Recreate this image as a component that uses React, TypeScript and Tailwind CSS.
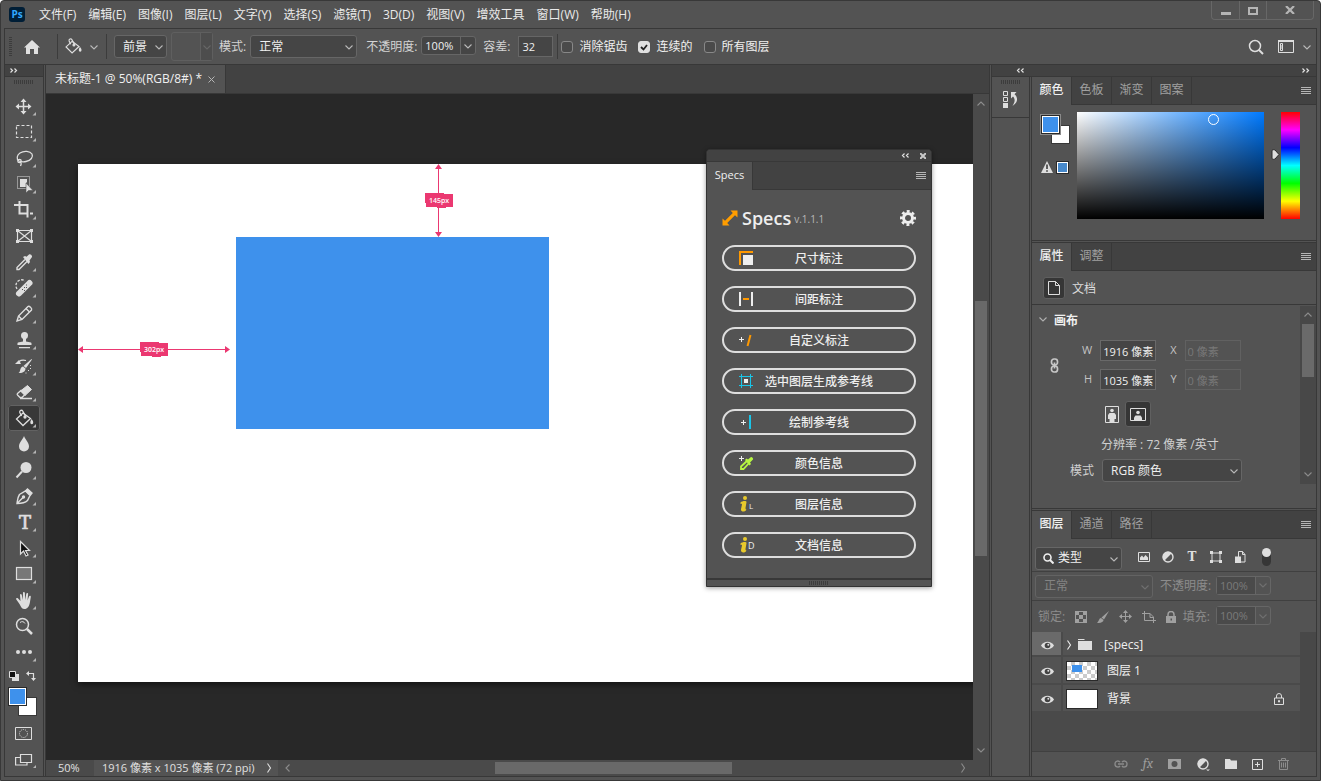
import type { ReactNode } from 'react';

const menus = [
  '文件(F)',
  '编辑(E)',
  '图像(I)',
  '图层(L)',
  '文字(Y)',
  '选择(S)',
  '滤镜(T)',
  '3D(D)',
  '视图(V)',
  '增效工具',
  '窗口(W)',
  '帮助(H)',
];

const Chevron = ({ dir = 'down', className = '' }: { dir?: 'down' | 'up' | 'left' | 'right'; className?: string }) => {
  const d = {
    down: 'M1.500 3.500L5 7l3.500-3.500',
    up: 'M1.500 6.500L5 3l3.500 3.500',
    left: 'M6.500 1.500L3 5l3.500 3.500',
    right: 'M3.500.5l3 4.500-3 4.500',
  }[dir];
  return (
    <svg width="10" height="10" viewBox="0 0 10 10" className={`shrink-0 ${className}`} fill="none" stroke="currentColor" strokeWidth="1.1">
      <path d={d} />
    </svg>
  );
};

const DoubleChevron = ({ left = false }: { left?: boolean }) => (
  <svg width="8" height="7" viewBox="0 0 8 7" fill="none" stroke="#e0e0e0" strokeWidth="1.2">
    <path d={left ? 'M3.500 1.500l-2 2 2 2M7.500 1.500l-2 2 2 2' : 'M.5 1.500l2 2-2 2M4.500 1.500l2 2-2 2'} />
  </svg>
);

const Grip = () => (
  <svg width="20" height="4" viewBox="0 0 20 4" stroke="#3c3c3c" strokeWidth="1">
    <path d="M.5 0v4M2.500 0v4M4.500 0v4M6.500 0v4M8.500 0v4M10.500 0v4M12.500 0v4M14.500 0v4M16.500 0v4M18.500 0v4" />
  </svg>
);

const PanelMenu = () => (
  <button aria-label="面板菜单" className="mr-[5px] ml-auto h-full">
    <svg width="10" height="8" viewBox="0 0 10 8" stroke="#b5b5b5" strokeWidth="1">
      <path d="M0 .5h10M0 2.500h10M0 4.500h10M0 6.500h10" />
    </svg>
  </button>
);

const BucketShape = () => (
  <g fill="none" stroke="#dedede" strokeWidth="1.3">
    <path d="M11 8L4.500 14l6.500 6.500 7.500-7z" />
    <path d="M9.500 11L7.800 7.500c-.6-2 2-3 2.900-1.500l3 5.500" />
    <circle cx="13" cy="12" r="1" fill="#dedede" />
    <path d="M19.500 14c1.500 1.500 2 3 1.500 4.500-.5 1-2 1-2.500 0-.5-1.500 0-3 1-4.500z" fill="#dedede" stroke="none" />
  </g>
);

const tools: { name: string; corner?: boolean; active?: boolean; icon: ReactNode }[] = [
  {
    name: '移动工具',
    corner: true,
    icon: (
      <>
        <path d="M11.500 7v13M5 13.500h13" stroke="#dedede" strokeWidth="1.500" />
        <path d="M11.500 5.500l3 3.500h-6zM11.500 21.500l3-3.500h-6zM3.500 13.500l3.500-3v6zM19.500 13.500l-3.500-3v6z" />
      </>
    ),
  },
  {
    name: '矩形选框工具',
    corner: true,
    icon: <rect x="4.500" y="6.500" width="15" height="12" fill="none" stroke="#dedede" strokeDasharray="3 2" strokeWidth="1.2" />,
  },
  {
    name: '套索工具',
    corner: true,
    icon: (
      <g fill="none" stroke="#dedede" strokeWidth="1.3">
        <path d="M7 16c-3-2-2-6 1-8 4-2.500 10-2 12 1 1.500 3-1 6.500-6 7.500-2 .5-5 .3-7-.5z" />
        <circle cx="7.500" cy="16" r="1.700" />
        <path d="M7.500 17c2 0 2 2 1 4" />
      </g>
    ),
  },
  {
    name: '对象选择工具',
    corner: true,
    icon: (
      <>
        <rect x="5.500" y="5.500" width="12" height="12" fill="none" stroke="#dedede" strokeDasharray="1 1" />
        <path d="M8 8h7v4l-1-1v5H8z" />
        <path d="M14 12v10l2.500-2.500H21z" stroke="#535353" strokeWidth=".6" />
      </>
    ),
  },
  {
    name: '裁剪工具',
    corner: true,
    icon: <path d="M2 8h13.500v12.500M7.500 4v12.500h8M18 16.500h3" fill="none" stroke="#dedede" strokeWidth="2" />,
  },
  {
    name: '图框工具',
    icon: (
      <>
        <path d="M5.500 7.500h14v11h-14zM5.500 7.500l14 11M19.500 7.500l-14 11" fill="none" stroke="#dedede" strokeWidth="1.2" />
        <path d="M4 6h3v3H4zM18 6h3v3h-3zM4 17h3v3H4zM18 17h3v3h-3z" />
      </>
    ),
  },
  {
    name: '吸管工具',
    corner: true,
    icon: (
      <>
        <path d="M13 10.500l-8 8v2h2l8-8" fill="none" stroke="#dedede" strokeWidth="1.400" />
        <path d="M11 8l2-1 1.500.7L17 5.500c1-1 3.500.5 3 2.500l-2.500 3.500.5 1.500-1.500 2z" />
      </>
    ),
  },
  {
    name: '污点修复画笔工具',
    corner: true,
    icon: (
      <>
        <path d="M5 14c-2-3-1-7 2-8.500s5-.5 6 .5" fill="none" stroke="#dedede" strokeDasharray="2.500 1.500" strokeWidth="1.300" />
        <path d="M7 18.500L17.500 8" stroke="#dedede" strokeWidth="6" strokeLinecap="round" />
        <path d="M10 14h1v1h-1zM12 12h1v1h-1zM14 12h1v1h-1zM12 15h1v1h-1zM14 9.500h1v1h-1z" fill="#535353" />
      </>
    ),
  },
  {
    name: '铅笔工具',
    corner: true,
    icon: (
      <g fill="none" stroke="#dedede" strokeWidth="1.400">
        <path d="M5 20l1.500-5L16 5.500c1-1 4.500 2 3.500 3.500L10 18.500z" />
        <path d="M6.500 15l3.500 3.500M14 7.500l3.500 3.500" />
      </g>
    ),
  },
  {
    name: '仿制图章工具',
    corner: true,
    icon: (
      <>
        <circle cx="12.500" cy="8.500" r="3.500" />
        <path d="M11 11h3v3.500l5 1c.8.500.5 2.500.5 2.500h-14s-.3-2 .5-2.500l5-1zM7 20h11v1.200H7z" />
      </>
    ),
  },
  {
    name: '历史记录画笔工具',
    corner: true,
    icon: (
      <>
        <path d="M3 11l4-4 2 4z" />
        <path d="M7 8.500c2-1.500 5-1.500 7-1" fill="none" stroke="#dedede" strokeWidth="1.200" />
        <path d="M19.500 6l.5.500-6 8.500-2.500-2zM11 13.500l2.500 2c0 3-3 5-7 4.500 1.500-1 1.500-2.500 2-4 .5-1.500 1.500-2.500 2.500-2.500z" />
        <path d="M18 12h1v1h-1zM18 15h1v1h-1zM16 17h1v1h-1zM13.500 19.500h1v1h-1z" />
      </>
    ),
  },
  {
    name: '橡皮擦工具',
    corner: true,
    icon: (
      <>
        <path d="M15.500 6.500l4 4-6.500 6-4.500-4.500z" stroke="#dedede" />
        <path d="M9 11.500l4 4-3 3H8L5.500 16c-.5-.5-.5-1 0-1.500zM8 19.500h12" fill="none" stroke="#dedede" strokeWidth="1.300" />
      </>
    ),
  },
  { name: '油漆桶工具', corner: true, active: true, icon: <BucketShape /> },
  {
    name: '模糊工具',
    corner: true,
    icon: <path d="M12 5c1.500 4 5 6.500 5 10.500a5 5 0 0 1-10 0C7 11.500 10.500 9 12 5z" />,
  },
  {
    name: '减淡工具',
    corner: true,
    icon: (
      <>
        <circle cx="14" cy="10.500" r="5.500" />
        <path d="M10 14.500l-5.500 6" stroke="#dedede" strokeWidth="2" />
      </>
    ),
  },
  {
    name: '钢笔工具',
    corner: true,
    icon: (
      <g fill="none" stroke="#dedede" strokeWidth="1.400">
        <path d="M5 20.500c.5-3 .5-6 2.500-9l6-3.500 4.500 4.500-2.500 5C13 20 9 20.500 5 20.500zM5.500 20l5.500-5.500" />
        <circle cx="11.500" cy="14" r="1" fill="#dedede" />
        <path d="M14 7.500l1.500-1.500 4.500 4-1.500 2z" fill="#dedede" />
      </g>
    ),
  },
  {
    name: '横排文字工具',
    corner: true,
    icon: (
      <text x="13" y="20" textAnchor="middle" fontFamily="DejaVu Serif" fontSize="18" stroke="#dedede" strokeWidth=".7">
        T
      </text>
    ),
  },
  {
    name: '路径选择工具',
    corner: true,
    icon: <path d="M8.500 6.500v12.500l3-3 2.500 5 2-1-2.500-4.500h4z" fill="#101010" stroke="#dedede" strokeWidth="1.200" />,
  },
  {
    name: '矩形工具',
    corner: true,
    icon: <rect x="4.500" y="6.500" width="15" height="12" fill="#777" stroke="#dedede" strokeWidth="1.200" />,
  },
  {
    name: '抓手工具',
    corner: true,
    icon: (
      <path d="M7.500 17L4.300 12.500c-.7-1.300.8-2 1.800-1l2.400 2.500L8 8c0-1.300 1.500-1.300 1.800 0l1 5 .2-7c0-1.400 1.800-1.400 1.900 0l.2 7 1.200-6.200c.3-1.300 2-1 1.800.2l-.6 6.500 1.500-4c.5-1.200 2-.7 1.800.5l-1 6c-.8 3.500-2.300 6-5.300 6-2.500 0-3.500-2-5-5z" />
    ),
  },
  {
    name: '缩放工具',
    icon: (
      <g fill="none" stroke="#dedede" strokeWidth="1.500">
        <circle cx="10.500" cy="11.500" r="6" />
        <path d="M8 9.500c2-1.500 4-1 5 1" strokeWidth="1" />
        <path d="M15 16l5 5" strokeWidth="2.500" />
      </g>
    ),
  },
  {
    name: '编辑工具栏',
    corner: true,
    icon: (
      <>
        <circle cx="6" cy="13" r="2" />
        <circle cx="12" cy="13" r="2" />
        <circle cx="18" cy="13" r="2" />
      </>
    ),
  },
];

const Swatches = ({ ring = false }: { ring?: boolean }) => (
  <div className="grid shrink-0 grid-cols-[10px_9px_10px] grid-rows-[10px_9px_10px]">
    <div className="col-start-2 col-end-4 row-start-2 row-end-4 border border-[#383838] bg-white" />
    <div
      className={`col-start-1 col-end-3 row-start-1 row-end-3 border border-[#2a2a2a] bg-white p-px ${ring ? 'outline outline-[#8a8a8a]' : ''}`}
    >
      <div className="h-full bg-[#3e91ec]" />
    </div>
  </div>
);

const Select = ({ label, value, className, dim = false }: { label: string; value: string; className: string; dim?: boolean }) => (
  <div className={`relative shrink-0 ${className}`}>
    <select
      aria-label={label}
      defaultValue={value}
      disabled={dim}
      className={`h-[23px] w-full appearance-none rounded-[3px] border pl-2 text-xs ${dim ? 'border-[#636363] bg-[#505050] text-[#848484]' : 'border-[#666] bg-[#454545] text-[#f0f0f0]'}`}
    >
      <option>{value}</option>
    </select>
    <Chevron className={`pointer-events-none absolute top-[7px] right-[3px] ${dim ? 'text-[#707070]' : 'text-[#b8b8b8]'}`} />
  </div>
);

const Percent = ({ label, dim = false }: { label: string; dim?: boolean }) => (
  <div
    className={`flex h-[19px] w-[55px] shrink-0 items-center rounded-[3px] border ${dim ? 'border-[#666] text-[#7a7a7a]' : 'border-[#666] bg-[#454545] text-[#f0f0f0]'}`}
  >
    <input aria-label={label} defaultValue="100%" disabled={dim} className={`h-full w-[38px] pl-[3px] text-[11px] ${dim ? 'bg-[#4a4a4a]' : ''}`} />
    <div className="flex h-full flex-1 items-center justify-center border-l border-[#666]">
      <Chevron className={dim ? 'text-[#707070]' : 'text-[#b8b8b8]'} />
    </div>
  </div>
);

const Check = ({ label, checked = false }: { label: string; checked?: boolean }) => (
  <label className="flex shrink-0 items-center gap-[6px] text-[#f0f0f0]">
    <span className="grid">
      <input
        type="checkbox"
        defaultChecked={checked}
        className="col-start-1 row-start-1 size-3 appearance-none rounded-[3px] border border-[#888] bg-[#4a4a4a] checked:border-[#e0e0e0] checked:bg-[#e0e0e0]"
      />
      {checked && (
        <svg width="12" height="12" viewBox="0 0 12 12" className="pointer-events-none col-start-1 row-start-1" fill="none" stroke="#222" strokeWidth="1.800">
          <path d="M3 6l2.500 2.500L9 4" />
        </svg>
      )}
    </span>
    {label}
  </label>
);

const Tabs = ({ items }: { items: string[] }) => (
  <div className="flex h-[28px] shrink-0 bg-[#424242]">
    {items.map((item, i) => (
      <button
        key={item}
        className={`w-10 border-r border-[#383838] pb-[2px] ${i === 0 ? 'bg-[#535353] font-medium text-[#f0f0f0]' : 'border-b text-[#a0a0a0]'}`}
      >
        {item}
      </button>
    ))}
    <div className="flex flex-1 border-b border-[#383838]">
      <PanelMenu />
    </div>
  </div>
);

const MenuBar = () => (
  <header className="flex h-[27px] shrink-0 items-center pl-2">
    <div className="mr-[14px] flex h-[15px] w-4 items-center justify-center rounded-[3px] bg-[#001e36] text-[10px] font-bold text-[#31a8ff]">Ps</div>
    <nav className="flex gap-3 text-[#eaeaea]">
      {menus.map((m) => (
        <button key={m} className="whitespace-nowrap">
          {m}
        </button>
      ))}
    </nav>
    <div className="mr-[6px] ml-auto flex h-[19px] self-start rounded-b border border-t-0 border-[#676767]">
      <button aria-label="最小化" className="flex w-7 justify-center border-r border-[#676767] pt-[11px]">
        <span className="h-[3px] w-[10px] bg-[#b5b5b5]" />
      </button>
      <button aria-label="最大化" className="flex w-[27px] justify-center border-r border-[#676767] pt-[6px]">
        <span className="h-2 w-[10px] border-2 border-[#b5b5b5]" />
      </button>
      <button aria-label="关闭" className="flex w-[46px] justify-center pt-[5px]">
        <svg width="10" height="8" viewBox="0 0 10 8" stroke="#b5b5b5" strokeWidth="2.200">
          <path d="M1 0l8 8M9 0L1 8" />
        </svg>
      </button>
    </div>
  </header>
);

const Divider = ({ className = '' }: { className?: string }) => <div className={`h-[25px] w-px shrink-0 bg-[#3c3c3c] ${className}`} />;

const OptionsBar = () => (
  <div className="flex h-9 shrink-0 items-center border-b border-[#383838] text-[#d4d4d4]">
    <svg width="3" height="20" viewBox="0 0 3 20" className="ml-1 shrink-0" stroke="#3c3c3c">
      <path d="M0 .5h3M0 2.500h3M0 4.500h3M0 6.500h3M0 8.500h3M0 10.500h3M0 12.500h3M0 14.500h3M0 16.500h3M0 18.500h3" />
    </svg>
    <button aria-label="主页" className="ml-3 shrink-0">
      <svg width="16" height="16" viewBox="0 0 16 16" fill="#e0e0e0">
        <path d="M8 1l8 7.500h-2V15h-4v-5H6v5H2V8.500H0z" />
      </svg>
    </button>
    <Divider className="ml-[17px]" />
    <button aria-label="油漆桶工具" className="ml-[3px] flex shrink-0 items-center gap-1">
      <svg width="24" height="26" viewBox="0 0 24 26" className="pb-[2px]">
        <BucketShape />
      </svg>
      <Chevron className="text-[#b8b8b8]" />
    </button>
    <Divider className="ml-[7px]" />
    <Select label="填充源" value="前景" className="ml-[7px] w-[53px]" />
    <div className="ml-1 flex h-[29px] w-[42px] shrink-0 rounded-[3px] border border-[#5f5f5f]">
      <div className="flex-1 border-r border-[#5f5f5f]" />
      <div className="flex w-[11px] items-center justify-center bg-[#4d4d4d]">
        <Chevron className="text-[#666]" />
      </div>
    </div>
    <span className="ml-[6px] shrink-0">模式:</span>
    <Select label="模式" value="正常" className="ml-1 w-[107px]" />
    <span className="ml-[9px] shrink-0">不透明度:</span>
    <div className="ml-1 pb-[2px]">
      <Percent label="不透明度" />
    </div>
    <label className="ml-[7px] flex shrink-0 items-center gap-2">
      容差:
      <input defaultValue="32" className="h-[21px] w-[35px] border border-[#666] bg-[#454545] pl-[3px] text-[11px] text-[#f0f0f0]" />
    </label>
    <Divider className="ml-1" />
    <div className="ml-[3px] flex gap-[11px]">
      <Check label="消除锯齿" />
      <Check label="连续的" checked />
      <Check label="所有图层" />
    </div>
    <div className="mr-1 ml-auto flex items-center">
      <button aria-label="搜索">
        <svg width="16" height="16" viewBox="0 0 16 16" fill="none" stroke="#dedede" strokeWidth="1.500">
          <circle cx="7" cy="7" r="5.500" />
          <path d="M11 11l4 4" strokeWidth="2" />
        </svg>
      </button>
      <button aria-label="工作区" className="ml-[14px] flex items-center gap-2">
        <svg width="16" height="13" viewBox="0 0 16 13" fill="none" stroke="#dedede">
          <path d="M.5.5h15v12H.5z" />
          <path d="M0 1h16" strokeWidth="2" />
          <path d="M2.500 3.500h2v7h-2zM2 6h3M2 8h3" />
        </svg>
        <Chevron className="text-[#b8b8b8]" />
      </button>
    </div>
  </div>
);

const Toolbar = () => (
  <aside className="flex w-[39px] shrink-0 flex-col border-r border-[#383838]">
    <div className="flex h-3 shrink-0 items-center border-b border-[#383838] bg-[#424242] pl-[5px]">
      <DoubleChevron />
    </div>
    <div className="flex h-4 shrink-0 justify-center pt-[3px]">
      <Grip />
    </div>
    {tools.map((t) => (
      <button
        key={t.name}
        aria-label={t.name}
        className={`mx-[3px] flex h-[26px] shrink-0 items-center justify-center rounded-[3px] ${t.active ? 'bg-[#383838] outline -outline-offset-1 outline-[#626262]' : ''}`}
      >
        <svg width="24" height="26" viewBox="0 0 24 26" fill="#dedede">
          {t.icon}
          {t.corner && <path d="M24 19v3.500h-3.500z" fill="#b5b5b5" />}
        </svg>
      </button>
    ))}
    <div className="flex h-[22px] shrink-0 items-center gap-[7px] pl-1">
      <svg width="10" height="10" viewBox="0 0 10 10">
        <path d="M3 3h7v7H3z" fill="#dedede" />
        <path d="M.5.5h6v6h-6z" fill="#111" stroke="#dedede" />
      </svg>
      <svg width="10" height="10" viewBox="0 0 10 10" fill="none" stroke="#dedede" strokeWidth="1.200">
        <path d="M1.500 2.500h6v6" />
        <path d="M3 0v5L0 2.500zM5 7h5L7.500 10z" fill="#dedede" stroke="none" />
      </svg>
    </div>
    <div className="pl-[3px]">
      <Swatches />
    </div>
    <button aria-label="快速蒙版" className="mt-1 flex h-[26px] shrink-0 items-center justify-center pr-[2px]">
      <svg width="17" height="13" viewBox="0 0 17 13" fill="none" stroke="#dedede">
        <path d="M.5.5h16v12H.5z" />
        <circle cx="8.500" cy="6.500" r="4" strokeDasharray="1 1" />
      </svg>
    </button>
    <button aria-label="屏幕模式" className="flex h-[26px] shrink-0 items-center justify-center pt-[3px] pl-[2px]">
      <svg width="21" height="16" viewBox="0 0 21 16" fill="none" stroke="#dedede" strokeWidth="1.200">
        <path d="M5 4.500H.6V12H12V9.500M5.500 1.500h11v8h-11z" />
        <path d="M21 12v3h-3z" fill="#b5b5b5" stroke="none" />
      </svg>
    </button>
  </aside>
);

const specs: { label: string; icon: ReactNode }[] = [
  {
    label: '尺寸标注',
    icon: (
      <>
        <path d="M1 14V1h13" fill="none" stroke="#f90" strokeWidth="2" />
        <path d="M4 4h10v10H4z" fill="#eee" />
      </>
    ),
  },
  {
    label: '间距标注',
    icon: (
      <>
        <path d="M1 0v14M13 0v14" stroke="#eee" strokeWidth="2" />
        <path d="M4 7h6" stroke="#f90" strokeWidth="2" />
      </>
    ),
  },
  {
    label: '自定义标注',
    icon: (
      <>
        <path d="M0 6.500h5M2.500 4v5" stroke="#eee" />
        <path d="M8.500 13l3-11" stroke="#f90" strokeWidth="2" />
      </>
    ),
  },
  {
    label: '选中图层生成参考线',
    icon: (
      <>
        <path d="M0 2.500h14M0 11.500h14M2.500 0v14M11.500 0v14" stroke="#19c5e8" />
        <path d="M5 5h4v4H5z" fill="#eee" />
      </>
    ),
  },
  {
    label: '绘制参考线',
    icon: (
      <>
        <path d="M2 7.500h5M4.500 5v5" stroke="#eee" />
        <path d="M11 0v14" stroke="#19c5e8" strokeWidth="2" />
      </>
    ),
  },
  {
    label: '颜色信息',
    icon: (
      <>
        <path d="M0 2.500h5M2.500 0v5" stroke="#eee" />
        <path d="M8.500 4.500L2 10.500V13h2.500l6-6.500" fill="none" stroke="#b6f542" strokeWidth="1.800" />
        <path d="M6 4l1.500-1.500L9 3.500 12 1c1.500 0 2.500 1.500 2 2.500L11 6.500 12 8l-1.500 1.500z" fill="#b6f542" />
      </>
    ),
  },
  {
    label: '图层信息',
    icon: (
      <>
        <circle cx="6" cy="1" r="2" fill="#e8c92c" />
        <path d="M1.500 5.500c1.500-1.500 6-2 6-.5L6.500 11c0 1 .5 1.500 1 1.500-1.500 3-6 2.500-5.500-.5l1-4.500c0-1-.5-1-1.500-.5z" fill="#e8c92c" />
        <text x="10" y="12" fontSize="8" fill="#eee" fontFamily="Open Sans">
          L
        </text>
      </>
    ),
  },
  {
    label: '文档信息',
    icon: (
      <>
        <circle cx="6" cy="1" r="2" fill="#e8c92c" />
        <path d="M1.500 5.500c1.500-1.500 6-2 6-.5L6.500 11c0 1 .5 1.500 1 1.500-1.500 3-6 2.500-5.500-.5l1-4.500c0-1-.5-1-1.500-.5z" fill="#e8c92c" />
        <text x="9" y="11" fontSize="9" fill="#eee" fontFamily="Open Sans">
          D
        </text>
      </>
    ),
  },
];

// Floating plug-in window over the canvas
const SpecsPanel = () => (
  <section className="absolute top-[55px] left-[660px] w-[226px] rounded-t border border-[#333] bg-[#535353] shadow-[0_1px_5px_rgba(0,0,0,0.4)]">
    <div className="flex h-3 items-center justify-end gap-[11px] rounded-t border-b border-[#383838] bg-[#424242] pr-[5px]">
      <DoubleChevron left />
      <svg width="6" height="6" viewBox="0 0 6 6" stroke="#c8c8c8" strokeWidth="2">
        <path d="M0 0l6 6M6 0L0 6" />
      </svg>
    </div>
    <div className="flex h-[28px] bg-[#424242]">
      <button className="w-[46px] border-r border-[#383838] bg-[#535353] pb-[2px] text-[11px] text-[#f0f0f0]">Specs</button>
      <div className="flex flex-1 border-b border-[#383838]">
        <PanelMenu />
      </div>
    </div>
    <div className="flex flex-col gap-[15px] px-[15px] pt-4 pb-5">
      <div className="flex h-6 items-center">
        <svg width="16" height="16" viewBox="0 0 16 16" fill="#ff9d00">
          <path d="M15.500.5v7L13 5.200 5.200 13l2.300 2.500h-7v-7L3 10.800 10.800 3 8.500.5z" />
        </svg>
        <h1 className="ml-1 text-lg leading-6 font-semibold text-[#eee]">Specs</h1>
        <span className="mt-1 ml-[3px] text-[10px] text-[#b8b8b8]">v.1.1.1</span>
        <button aria-label="设置" className="ml-auto">
          <svg width="16" height="16" viewBox="0 0 16 16">
            <circle cx="8" cy="8" r="4.500" fill="none" stroke="#eee" strokeWidth="3" />
            <circle cx="8" cy="8" r="6.700" fill="none" stroke="#eee" strokeWidth="2.600" strokeDasharray="2.900 2.362" strokeDashoffset="1.450" />
          </svg>
        </button>
      </div>
      {specs.map((s) => (
        <button
          key={s.label}
          className="grid h-[26px] w-full grid-cols-[15px_1fr_15px] items-center rounded-full border-2 border-[#dedede] px-[15px] text-xs font-medium text-[#eee]"
        >
          <svg width="15" height="14" viewBox="0 0 15 14" overflow="visible">
            {s.icon}
          </svg>
          <span className="pt-px whitespace-nowrap">{s.label}</span>
        </button>
      ))}
    </div>
    <div className="flex h-2 justify-center border-t-2 border-[#383838] pt-px">
      <Grip />
    </div>
  </section>
);

const tag =
  'absolute flex h-[15px] w-7 items-center justify-center bg-[#eb3871] text-[7px] leading-none font-semibold text-white [clip-path:polygon(0_0,19px_0,19px_1px,28px_1px,28px_14px,21px_14px,21px_15px,12px_15px,12px_14px,1px_14px,1px_10px,0_10px)]';

const Canvas = () => (
  <div className="relative min-w-0 flex-1 overflow-hidden bg-[#282828] pt-[70px] pl-8">
    <div className="relative h-[518px] w-[958px] bg-white shadow-[0_3px_6px_rgba(0,0,0,0.5)]">
      <div className="absolute top-[73px] left-[158px] h-[192px] w-[313px] bg-[#3e91ec]" />
      <svg width="8" height="73" viewBox="0 0 8 73" className="absolute top-0 left-[356px]" fill="#eb3871" stroke="#eb3871">
        <path d="M4.500 2v69" />
        <path d="M4.500 0l3.500 5H1zM4.500 73l3.500-5H1z" stroke="none" />
      </svg>
      <svg width="152" height="8" viewBox="0 0 152 8" className="absolute top-[182px] left-0" fill="#eb3871" stroke="#eb3871">
        <path d="M2 3.500h148" />
        <path d="M0 3.500L5 0v7zM152 3.500L147 0v7z" stroke="none" />
      </svg>
      <span className={`${tag} top-[29px] left-[347px]`}>145px</span>
      <span className={`${tag} top-[178px] left-[62px]`}>302px</span>
    </div>
    <SpecsPanel />
  </div>
);

const DocumentArea = () => (
  <main className="mx-px flex min-w-0 flex-1 flex-col border-x border-[#383838]">
    <div className="flex h-[29px] shrink-0 border-b border-[#383838] bg-[#424242]">
      <div className="flex items-center border-r border-[#383838] bg-[#535353] pr-[10px] pl-[9px] text-[#f0f0f0]">
        <span className="whitespace-nowrap">未标题-1 @ 50%(RGB/8#) *</span>
        <button aria-label="关闭文档" className="ml-[6px]">
          <svg width="7" height="7" viewBox="0 0 7 7" stroke="#b5b5b5">
            <path d="M.5.5l6 6M6.500.5l-6 6" />
          </svg>
        </button>
      </div>
    </div>
    <div className="flex min-h-0 flex-1">
      <Canvas />
      <div className="flex w-4 flex-col items-center bg-[#4a4a4a] text-[#8c8c8c]">
        <div className="flex h-5 items-center">
          <Chevron dir="up" />
        </div>
        <div className="grow-187" />
        <div className="w-3 grow-255 bg-[#696969]" />
        <div className="grow-184" />
        <div className="flex h-5 items-center">
          <Chevron />
        </div>
      </div>
    </div>
    <div className="flex h-[16px] shrink-0 items-center bg-[#4a4a4a] text-[#e0e0e0]">
      <div className="flex h-full w-12 items-center pl-3 text-[11px]">50%</div>
      <div className="flex h-full w-[184px] items-center justify-between bg-[#535353] pr-1 pl-2 text-[11px] whitespace-nowrap">
        1916 像素 x 1035 像素 (72 ppi)
        <Chevron dir="right" />
      </div>
      <div className="flex h-full min-w-0 flex-1 items-center pr-[5px] pl-[5px] text-[#8c8c8c]">
        <Chevron dir="left" />
        <div className="ml-[3px] grow-198" />
        <div className="h-3 grow-235 bg-[#696969]" />
        <div className="mr-[3px] grow-222" />
        <Chevron dir="right" />
      </div>
      <div className="w-4" />
    </div>
  </main>
);

const ColorPanel = () => (
  <section className="shrink-0 border-b border-[#383838]">
    <Tabs items={['颜色', '色板', '渐变', '图案']} />
    <div className="flex h-[135px] gap-[7px] pt-[7px] pr-4 pl-[9px]">
      <div className="flex w-[29px] flex-col gap-[17px] pt-[3px]">
        <Swatches ring />
        <div className="flex gap-[3px]">
          <svg width="12" height="12" viewBox="0 0 12 12">
            <path d="M6 0l6 12H0z" fill="#dedede" />
            <path d="M6 3.500v4.500M6 9.200v1.600" stroke="#3c3c3c" strokeWidth="1.600" />
          </svg>
          <div className="size-[13px] border border-[#2a2a2a] bg-white p-px">
            <div className="h-full bg-[#4789cb]" />
          </div>
        </div>
      </div>
      <div className="relative h-[107px] flex-1 bg-[linear-gradient(to_top,#000,transparent),linear-gradient(to_right,#fff,#007aff)]">
        <div className="absolute top-[2px] left-[70%] size-[11px] rounded-full border border-white" />
      </div>
      <div className="flex">
        <svg width="9" height="11" viewBox="0 0 9 11" className="mt-[37px] mr-px">
          <path d="M1 1.500C2 .5 3 .5 4 1l4 4.500L4 10c-1 .5-2 .5-3-.5z" fill="#dedede" stroke="#2a2a2a" />
        </svg>
        <div className="h-[107px] w-[19px] bg-[linear-gradient(to_bottom,#f00,#f0f,#00f,#0ff,#0f0,#ff0,#f00)]" />
      </div>
    </div>
  </section>
);

const Size = ({ label, value, dim = false }: { label: string; value: string; dim?: boolean }) => (
  <label className="flex items-center justify-end gap-2 text-[11px] text-[#c4c4c4]">
    {label}
    <input
      defaultValue={value}
      disabled={dim}
      className={`h-[21px] w-14 border px-[2px] ${dim ? 'border-[#616161] text-[#787878]' : 'border-[#696969] bg-[#454545] text-[#f0f0f0]'}`}
    />
  </label>
);

const PropertiesPanel = () => (
  <section className="mt-px shrink-0 border-y border-[#383838]">
    <Tabs items={['属性', '调整']} />
    <div className="flex h-[34px] items-center gap-[7px] border-b border-[#383838] pl-[11px] text-[#dcdcdc]">
      <span className="flex size-[22px] items-center justify-center rounded-[3px] border border-[#5f5f5f] bg-[#363636]">
        <svg width="12" height="14" viewBox="0 0 12 14" fill="none" stroke="#dedede">
          <path d="M.5.5h7l4 4v9H.5zM7.500.5v4h4" />
        </svg>
      </span>
      <span className="pt-[2px]">文档</span>
    </div>
    <div className="flex h-[203px]">
      <div className="flex-1">
        <h2 className="flex h-[30px] items-center gap-[6px] pt-px pl-[6px] font-bold text-[#f0f0f0]">
          <Chevron className="mb-1 text-[#b0b0b0]" />
          画布
        </h2>
        <div className="flex items-center pt-[5px] pl-[18px]">
          <svg width="9" height="15" viewBox="0 0 9 15" fill="none" stroke="#c8c8c8" strokeWidth="1.700">
            <rect x="1.500" y="1" width="6" height="6" rx="2.500" />
            <rect x="1.500" y="8" width="6" height="6" rx="2.500" />
            <path d="M4.500 4.500v6" />
          </svg>
          <div className="ml-[23px] grid grid-cols-[auto_auto] gap-x-[14px] gap-y-2">
            <Size label="W" value="1916 像素" />
            <Size label="X" value="0 像素" dim />
            <Size label="H" value="1035 像素" />
            <Size label="Y" value="0 像素" dim />
          </div>
        </div>
        <div className="mt-[11px] flex items-center gap-[6px] pl-[73px]">
          <button aria-label="纵向">
            <svg width="14" height="17" viewBox="0 0 14 17" fill="#dedede">
              <path d="M.5.5h13v16H.5z" fill="none" stroke="#dedede" />
              <circle cx="7" cy="4.500" r="1.800" />
              <path d="M4.500 7h5L11 9v4H9.500v3h-5v-3H3V9z" />
            </svg>
          </button>
          <button aria-label="横向" className="flex size-[26px] items-center justify-center rounded-[3px] border border-[#606060] bg-[#363636]">
            <svg width="16" height="13" viewBox="0 0 16 13" fill="#dedede">
              <path d="M.5.5h15v12H.5z" fill="none" stroke="#dedede" />
              <circle cx="8" cy="4.500" r="1.800" />
              <path d="M4 12V9.500L5.500 7.500h5L12 9.500V12z" />
            </svg>
          </button>
        </div>
        <p className="mt-[10px] pl-[69px] text-[#d0d0d0]">分辨率 : 72 像素 /英寸</p>
        <div className="mt-[6px] flex items-center gap-2 pl-[38px] text-[#d0d0d0]">
          模式
          <Select label="颜色模式" value="RGB 颜色" className="w-[140px]" />
        </div>
      </div>
      <div className="mt-px flex h-[178px] w-4 flex-col items-center bg-[#484848] text-[#8c8c8c]">
        <Chevron dir="up" className="my-1" />
        <div className="h-[53px] w-3 bg-[#6a6a6a]" />
        <Chevron className="mt-auto mb-[5px]" />
      </div>
    </div>
  </section>
);

const Eye = () => (
  <svg width="13" height="9" viewBox="0 0 13 9">
    <path d="M0 4.500C3-.5 10-.5 13 4.500 10 9.500 3 9.500 0 4.500z" fill="#dedede" />
    <circle cx="6.500" cy="4.500" r="2.800" fill="#444" />
    <circle cx="7.300" cy="3.700" r="1" fill="#dedede" />
  </svg>
);

const Folder = () => (
  <svg width="14" height="12" viewBox="0 0 14 12" fill="#dedede">
    <path d="M0 0h6l1 1H0zM0 2h14v9H0z" />
  </svg>
);

const LayerRow = ({ active = false, children }: { active?: boolean; children: ReactNode }) => (
  <li className={`flex border-b-2 border-[#4a4a4a] bg-[#535353] ${active ? 'h-[25px]' : 'h-7'}`}>
    <button
      aria-label="可见性"
      className={`flex w-[31px] items-center justify-center border-r-2 border-[#4a4a4a] pt-[3px] pl-[2px] ${active ? 'bg-[#6a6a6a]' : ''}`}
    >
      <Eye />
    </button>
    <div className={`flex flex-1 items-center pt-[2px] text-[#f0f0f0] ${active ? 'pl-px' : 'pl-[3px]'}`}>{children}</div>
  </li>
);

const LayersPanel = () => (
  <section className="mt-px flex min-h-0 flex-1 flex-col border-t border-[#383838]">
    <Tabs items={['图层', '通道', '路径']} />
    <div className="flex h-[33px] shrink-0 items-center border-b border-[#404040] pt-[6px] pl-[3px]">
      <div className="relative">
        <select aria-label="图层类型" className="h-[23px] w-[87px] appearance-none rounded-[3px] border border-[#666] bg-[#454545] pl-[22px] text-xs text-[#f0f0f0]">
          <option>类型</option>
        </select>
        <svg width="11" height="11" viewBox="0 0 11 11" className="pointer-events-none absolute top-[6px] left-2" fill="none" stroke="#eee" strokeWidth="1.600">
          <circle cx="4.500" cy="4.500" r="3.500" />
          <path d="M7 7l3.500 3.500" strokeWidth="2" />
        </svg>
        <Chevron className="pointer-events-none absolute top-[7px] right-[3px] text-[#b8b8b8]" />
      </div>
      <div className="ml-4 flex items-center gap-3 pb-[2px]">
        <svg width="12" height="10" viewBox="0 0 12 10" fill="#dedede">
          <path d="M.5.5h11v9H.5z" fill="none" stroke="#dedede" />
          <path d="M2 8V5.500L4 3.500l1.500 2L7.500 3 10 5.500V8z" />
        </svg>
        <svg width="12" height="12" viewBox="0 0 12 12">
          <circle cx="6" cy="6" r="5" fill="none" stroke="#dedede" strokeWidth="1.400" />
          <path d="M9.700 2.300A5.200 5.200 0 0 0 2.300 9.700z" fill="#dedede" />
        </svg>
        <span className="w-3 text-center font-['DejaVu_Serif'] text-xs leading-4 font-bold text-[#dedede]">T</span>
        <svg width="12" height="12" viewBox="0 0 12 12" fill="#dedede">
          <path d="M2 2h8v8H2z" fill="none" stroke="#dedede" />
          <path d="M0 0h3v3H0zM9 0h3v3H9zM0 9h3v3H0zM9 9h3v3H9z" />
        </svg>
        <svg width="12" height="12" viewBox="0 0 12 12">
          <path d="M4.500 6V.5h4l2.500 3v7.500H7M8.500.5v3H11" fill="none" stroke="#dedede" />
          <path d="M1 5.500h6V12H1z" fill="#dedede" />
        </svg>
      </div>
      <button aria-label="图层过滤" className="mb-[2px] ml-4 flex h-[18px] w-[9px] items-start rounded-full bg-[#363636]">
        <span className="size-[9px] rounded-full bg-[#dedede]" />
      </button>
    </div>
    <div className="flex h-[29px] shrink-0 items-center border-b border-[#404040] pl-[3px] text-[#8c8c8c]">
      <Select label="混合模式" value="正常" className="w-[118px]" dim />
      <span className="mr-auto ml-[7px]">不透明度:</span>
      <div className="mr-[45px] pb-[2px]">
        <Percent label="图层不透明度" dim />
      </div>
    </div>
    <div className="flex h-[31px] shrink-0 items-center pl-[6px] text-[#8c8c8c]">
      锁定:
      <div className="mr-auto ml-[10px] flex items-center gap-[10px]">
        <svg width="12" height="12" viewBox="0 0 12 12" fill="#a0a0a0">
          <path d="M.5.5h11v11H.5z" fill="none" stroke="#a0a0a0" />
          <path d="M0 0h4v4H0zM8 0h4v4H8zM4 4h4v4H4zM0 8h4v4H0zM8 8h4v4H8z" />
        </svg>
        <svg width="12" height="12" viewBox="0 0 12 12" fill="#a0a0a0">
          <path d="M12 0L7 8.500 4.500 6.500zM4 7l2.500 2c0 2-3 3.500-6.500 2.800C2 10.500 2 7 4 7z" />
        </svg>
        <svg width="13" height="13" viewBox="0 0 13 13" fill="#a0a0a0">
          <path d="M6.500 1v11M1 6.500h11" stroke="#a0a0a0" />
          <path d="M6.500 0L9 3H4zM6.500 13L9 10H4zM0 6.500L3 4v5zM13 6.500L10 4v5z" />
        </svg>
        <svg width="14" height="12" viewBox="0 0 14 12" fill="none" stroke="#a0a0a0">
          <path d="M0 2.500h8l3.500 3.500v6M2.500 0v9.500H14M8 2.500v4h3.500" />
        </svg>
        <svg width="10" height="12" viewBox="0 0 10 12">
          <path d="M0 5h10v7H0z" fill="#a0a0a0" />
          <path d="M2 5V3.500a3 3 0 0 1 6 0V5" fill="none" stroke="#a0a0a0" strokeWidth="1.500" />
          <path d="M4.500 7.500h1.500v2H4.500z" fill="#535353" />
        </svg>
      </div>
      <span className="mr-[6px]">填充:</span>
      <div className="mr-[45px] pb-[2px]">
        <Percent label="填充" dim />
      </div>
    </div>
    <div className="flex min-h-0 flex-1 bg-[#4a4a4a]">
      <ul className="flex-1">
        <LayerRow active>
          <Chevron dir="right" />
          <span className="mr-3 ml-1">
            <Folder />
          </span>
          [specs]
        </LayerRow>
        <LayerRow>
          <div className="mr-[9px] h-5 w-8 border border-[#2a2a2a] bg-[repeating-conic-gradient(#ccc_0_25%,#fff_0_50%)] bg-size-[8px_8px] pt-[3px] pl-[5px]">
            <div className="h-[7px] w-[10px] bg-[#3e91ec]" />
          </div>
          图层 1
        </LayerRow>
        <LayerRow>
          <div className="mr-[9px] h-5 w-8 border border-[#2a2a2a] bg-white" />
          背景
          <svg width="10" height="12" viewBox="0 0 10 12" className="mr-4 ml-auto" fill="none" stroke="#dedede">
            <path d="M.5 5h9v6.500h-9zM2.500 5V3a2.500 2.500 0 0 1 5 0v2" />
            <path d="M4.500 7.500h1v1.500h-1z" />
          </svg>
        </LayerRow>
      </ul>
      <div className="w-4 bg-[#484848]" />
    </div>
    <div className="flex h-[25px] shrink-0 items-center justify-end gap-[15px] border-t border-[#404040] pr-[27px]">
      <button aria-label="链接图层">
        <svg width="14" height="8" viewBox="0 0 14 8" fill="none" stroke="#8c8c8c" strokeWidth="1.300">
          <path d="M6 2.200C5 .5 1 .3 1 4s4 3.500 5 1.800M8 2.200C9 .5 13 .3 13 4s-4 3.500-5 1.800M4 4h6" />
        </svg>
      </button>
      <button aria-label="图层样式" className="font-serif text-sm leading-4 text-[#9c9c9c] italic">
        fx
      </button>
      <button aria-label="图层蒙版">
        <svg width="13" height="10" viewBox="0 0 13 10">
          <path d="M0 0h13v10H0z" fill="#a0a0a0" />
          <circle cx="6.500" cy="5" r="3" fill="#535353" />
        </svg>
      </button>
      <button aria-label="调整图层">
        <svg width="14" height="14" viewBox="0 0 14 14">
          <circle cx="7" cy="7" r="5" fill="none" stroke="#dedede" strokeWidth="1.400" />
          <path d="M10.700 3.300A5.200 5.200 0 0 0 3.300 10.700zM10 12.500h4l-2 1.500z" fill="#dedede" />
        </svg>
      </button>
      <button aria-label="新建组">
        <svg width="12" height="10" viewBox="0 0 12 10" fill="#dedede">
          <path d="M0 0h5l1 1.500h6V10H0z" />
        </svg>
      </button>
      <button aria-label="新建图层">
        <svg width="11" height="11" viewBox="0 0 11 11" fill="none" stroke="#dedede">
          <path d="M.5.5h10v10H.5zM5.500 3v5M3 5.500h5" />
        </svg>
      </button>
      <button aria-label="删除图层">
        <svg width="11" height="12" viewBox="0 0 11 12" fill="none" stroke="#8c8c8c">
          <path d="M0 2.500h11M3.500 2.500v-2h4v2M1.500 2.500v9h8v-9M3.500 4.500v5M5.500 4.500v5M7.500 4.500v5" />
        </svg>
      </button>
    </div>
  </section>
);

const Dock = () => (
  <aside className="flex w-[325px] shrink-0 flex-col border-l border-[#383838]">
    <div className="flex h-3 shrink-0 items-center justify-between border-b border-[#383838] bg-[#424242] pr-[6px] pl-6">
      <DoubleChevron left />
      <DoubleChevron />
    </div>
    <div className="flex min-h-0 flex-1">
      <div className="w-[38px] shrink-0 border-r border-[#383838]">
        <div className="flex h-[41px] flex-col items-center gap-[7px] border-b border-[#383838] pt-[3px]">
          <Grip />
          <button aria-label="历史记录">
            <svg width="15" height="17" viewBox="0 0 15 17" fill="none" stroke="#dedede" className="block">
              <path d="M.5.5h4v4h-4zM.5 6.500h4v4h-4z" />
              <path d="M0 12h5v5H0z" fill="#dedede" stroke="none" />
              <path d="M8 1h5.500l-2 2.200c3.500 3 4 8-2 11.800C12.500 10.500 12 7.500 10 5.500L8 7.500z" fill="#dedede" stroke="none" />
            </svg>
          </button>
        </div>
      </div>
      <div className="ml-px flex min-w-0 flex-1 flex-col border-l border-[#383838]">
        <ColorPanel />
        <PropertiesPanel />
        <LayersPanel />
      </div>
    </div>
  </aside>
);

export default function App() {
  return (
    <div className="flex h-screen flex-col overflow-hidden rounded-t border border-[#383838] bg-[#535353] font-['Open_Sans','Noto_Sans_CJK_SC',sans-serif] text-xs select-none">
      <MenuBar />
      <div className="mx-[3px] mb-[3px] flex min-h-0 flex-1 flex-col border border-[#383838]">
        <OptionsBar />
        <div className="flex min-h-0 flex-1">
          <Toolbar />
          <DocumentArea />
          <Dock />
        </div>
      </div>
    </div>
  );
}
